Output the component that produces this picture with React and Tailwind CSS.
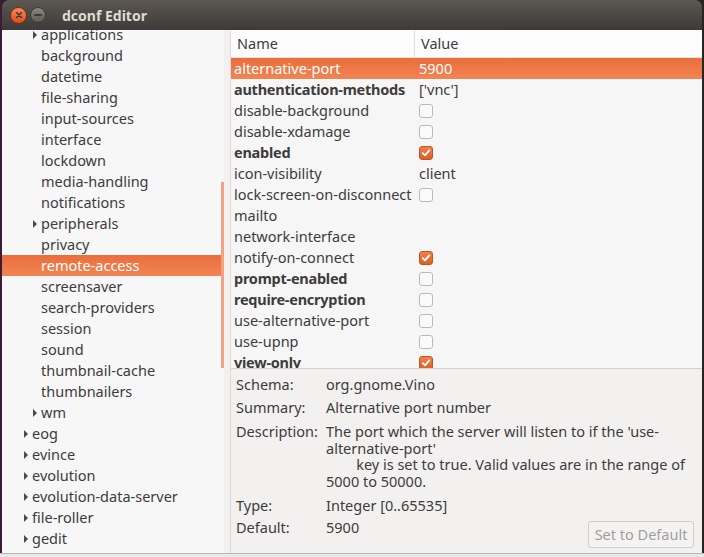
import React from "react";

const font = { fontFamily: '"Noto Sans", "Open Sans", sans-serif' };

const tree = [
  { name: "applications", depth: 1, arrow: true },
  { name: "background", depth: 1 },
  { name: "datetime", depth: 1 },
  { name: "file-sharing", depth: 1 },
  { name: "input-sources", depth: 1 },
  { name: "interface", depth: 1 },
  { name: "lockdown", depth: 1 },
  { name: "media-handling", depth: 1 },
  { name: "notifications", depth: 1 },
  { name: "peripherals", depth: 1, arrow: true },
  { name: "privacy", depth: 1 },
  { name: "remote-access", depth: 1, selected: true },
  { name: "screensaver", depth: 1 },
  { name: "search-providers", depth: 1 },
  { name: "session", depth: 1 },
  { name: "sound", depth: 1 },
  { name: "thumbnail-cache", depth: 1 },
  { name: "thumbnailers", depth: 1 },
  { name: "wm", depth: 1, arrow: true },
  { name: "eog", depth: 0, arrow: true },
  { name: "evince", depth: 0, arrow: true },
  { name: "evolution", depth: 0, arrow: true },
  { name: "evolution-data-server", depth: 0, arrow: true },
  { name: "file-roller", depth: 0, arrow: true },
  { name: "gedit", depth: 0, arrow: true },
  { name: "gnome-desktop", depth: 0, arrow: true },
];

const keys = [
  { name: "alternative-port", value: "5900", selected: true },
  { name: "authentication-methods", value: "['vnc']", bold: true },
  { name: "disable-background", check: false },
  { name: "disable-xdamage", check: false },
  { name: "enabled", check: true, bold: true },
  { name: "icon-visibility", value: "client" },
  { name: "lock-screen-on-disconnect", check: false },
  { name: "mailto", value: "" },
  { name: "network-interface", value: "" },
  { name: "notify-on-connect", check: true },
  { name: "prompt-enabled", check: false, bold: true },
  { name: "require-encryption", check: false, bold: true },
  { name: "use-alternative-port", check: false },
  { name: "use-upnp", check: false },
  { name: "view-only", check: true, bold: true },
];

function Arrow() {
  return (
    <span className="mr-[4px] inline-block h-0 w-0 border-y-[4px] border-l-[4px] border-y-transparent border-l-[#4a4a4a]" />
  );
}

function CheckBox({ checked }) {
  if (checked) {
    return (
      <span className="flex h-[14px] w-[14px] items-center justify-center rounded-[3px] border border-[#c4541f] bg-gradient-to-b from-[#f0804a] to-[#dd5f26]">
        <svg width="10" height="10" viewBox="0 0 10 10">
          <path d="M1.8 5.2 L4 7.4 L8.3 2.4" fill="none" stroke="#fff" strokeWidth="1.8" strokeLinecap="round" strokeLinejoin="round" />
        </svg>
      </span>
    );
  }
  return <span className="block h-[14px] w-[14px] rounded-[3px] border border-[#b9b9b9] bg-[#fbfbfb]" />;
}

function TitleBar() {
  return (
    <div className="flex h-[30px] shrink-0 items-center rounded-t-[7px] bg-gradient-to-b from-[#5c5851] to-[#3c3b37] pl-[8px]">
      <div className="flex h-[17px] w-[17px] items-center justify-center rounded-full border border-[#7a2a10] bg-gradient-to-b from-[#f58a5c] to-[#df4a16]">
        <svg width="8" height="8" viewBox="0 0 8 8">
          <path d="M1.5 1.5 L6.5 6.5 M6.5 1.5 L1.5 6.5" stroke="#3c3b37" strokeWidth="1.6" strokeLinecap="round" />
        </svg>
      </div>
      <div className="ml-[3px] flex h-[16px] w-[16px] items-center justify-center rounded-full border border-[#3a3934] bg-gradient-to-b from-[#8b877f] to-[#5f5c55]">
        <span className="block h-[2px] w-[8px] rounded bg-[#3c3b37]" />
      </div>
      <span className="ml-[16px] text-[14px] font-bold text-[#dfdbd2]">dconf Editor</span>
    </div>
  );
}

function Tree() {
  return (
    <div className="relative w-[222px] shrink-0 overflow-hidden bg-[#f7f7f7]">
      <div className="-mt-[6px] flex flex-col">
        {tree.map((item) => (
          <div
            key={item.name}
            className={`flex h-[21px] shrink-0 items-center text-[14.5px] ${
              item.selected
                ? "bg-gradient-to-b from-[#ea6e3c] to-[#f28453] text-white"
                : "text-[#3c3c3c]"
            } ${item.depth === 1 ? "pl-[31px]" : "pl-[22px]"}`}
          >
            <span className="flex w-[8px] items-center">{item.arrow ? <Arrow /> : null}</span>
            <span className="leading-none">{item.name}</span>
          </div>
        ))}
      </div>
      <div className="absolute right-0 top-[152px] h-[186px] w-[3px] bg-[#f0a283]" />
    </div>
  );
}

function KeyTable() {
  return (
    <div className="flex h-[339px] shrink-0 flex-col overflow-hidden border-b border-[#d3d2d0] bg-[#f6f6f6]">
      <div className="flex h-[28px] shrink-0 items-center border-b border-[#e3e3e3] bg-[#fcfcfd] text-[14.5px] text-[#3c3c3c]">
        <span className="h-full w-[184px] border-r border-[#dedede] pl-[6px] leading-[27px]">Name</span>
        <span className="pl-[6px]">Value</span>
      </div>
      {keys.map((k) => (
        <div
          key={k.name}
          className={`flex h-[21px] shrink-0 items-center text-[14.5px] ${
            k.selected
              ? "bg-gradient-to-b from-[#ea6e3c] to-[#f28453] text-white"
              : "text-[#3c3c3c]"
          }`}
        >
          <span
            className={`w-[188px] shrink-0 pl-[3px] leading-none ${
              k.bold ? "font-bold tracking-[-0.25px]" : ""
            }`}
          >
            {k.name}
          </span>
          {k.check === undefined ? (
            <span className="leading-none">{k.value}</span>
          ) : (
            <CheckBox checked={k.check} />
          )}
        </div>
      ))}
    </div>
  );
}

function Details() {
  const label = "w-[90px] shrink-0";
  return (
    <div className="relative flex flex-1 flex-col bg-[#f2f1f0] pl-[5px] pt-[4px] text-[14.5px] text-[#3c3c3c]">
      <div className="flex h-[23px] items-center">
        <span className={label}>Schema:</span>
        <span>org.gnome.Vino</span>
      </div>
      <div className="flex h-[24px] items-center">
        <span className={label}>Summary:</span>
        <span>Alternative port number</span>
      </div>
      <div className="flex pt-[3px] leading-[16.5px]">
        <span className={label}>Description:</span>
        <div className="flex flex-col whitespace-pre">
          <span>The port which the server will listen to if the 'use-</span>
          <span>alternative-port'</span>
          <span>{"        key is set to true. Valid values are in the range of"}</span>
          <span>5000 to 50000.</span>
        </div>
      </div>
      <div className="mt-[6px] flex h-[22px] items-center">
        <span className={label}>Type:</span>
        <span>Integer [0..65535]</span>
      </div>
      <div className="flex h-[22px] items-center">
        <span className={label}>Default:</span>
        <span>5900</span>
      </div>
      <button
        type="button"
        disabled
        className="absolute bottom-[5px] right-[8px] h-[27px] w-[106px] rounded-[3px] border border-[#cfcecc] bg-[#f4f3f2] text-[14.5px] text-[#a09f9d]"
      >
        Set to Default
      </button>
    </div>
  );
}

export default function App() {
  return (
    <div className="flex h-[557px] w-[704px] flex-col overflow-hidden bg-[#262522]" style={font}>
      <div className="flex h-[553px] shrink-0">
        <div className="w-[2px] shrink-0 bg-[#3d1a35]" />
        <div className="flex w-[700px] shrink-0 flex-col overflow-hidden">
          <TitleBar />
          <div className="flex min-h-0 flex-1 bg-[#f2f1f0]">
            <Tree />
            <div className="w-[7px] shrink-0 border-r border-[#dcdbd9] bg-[#f2f1f0]" />
            <div className="flex min-w-0 flex-1 flex-col">
              <KeyTable />
              <Details />
            </div>
          </div>
        </div>
      </div>
      <div className="h-[4px] shrink-0 border-t border-[#b8b8b8] bg-[#e8e8e8]" />
    </div>
  );
}
